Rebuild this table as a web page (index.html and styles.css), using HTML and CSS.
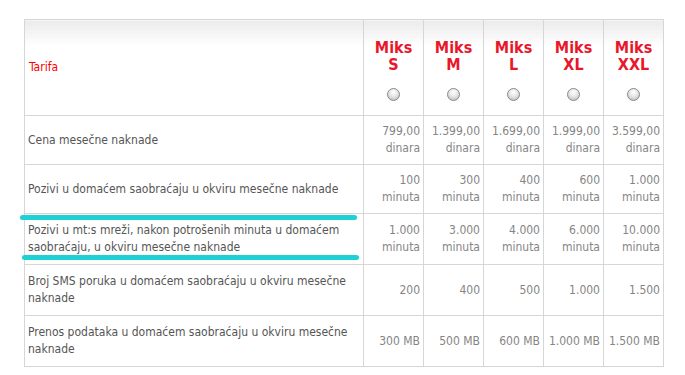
FILE: index.html
```html
<!DOCTYPE html>
<html lang="sr">
<head>
<meta charset="utf-8">
<title>Tarife</title>
<link rel="stylesheet" href="styles.css">
</head>
<body>
<div class="wrap">
  <table class="tariffs">
    <colgroup>
      <col class="c-label"><col class="c-plan"><col class="c-plan"><col class="c-plan"><col class="c-plan"><col class="c-plan">
    </colgroup>
    <thead>
      <tr class="head">
        <th class="label-head">Tarifa</th>
        <th class="plan"><div class="name">Miks<br>S</div><span class="radio"></span></th>
        <th class="plan"><div class="name">Miks<br>M</div><span class="radio"></span></th>
        <th class="plan"><div class="name">Miks<br>L</div><span class="radio"></span></th>
        <th class="plan"><div class="name">Miks<br>XL</div><span class="radio"></span></th>
        <th class="plan"><div class="name">Miks<br>XXL</div><span class="radio"></span></th>
      </tr>
    </thead>
    <tbody>
      <tr class="r49">
        <td class="label">Cena mesečne naknade</td>
        <td class="num">799,00<br>dinara</td>
        <td class="num">1.399,00<br>dinara</td>
        <td class="num">1.699,00<br>dinara</td>
        <td class="num">1.999,00<br>dinara</td>
        <td class="num">3.599,00<br>dinara</td>
      </tr>
      <tr class="r49">
        <td class="label">Pozivi u domaćem saobraćaju u okviru mesečne naknade</td>
        <td class="num">100<br>minuta</td>
        <td class="num">300<br>minuta</td>
        <td class="num">400<br>minuta</td>
        <td class="num">600<br>minuta</td>
        <td class="num">1.000<br>minuta</td>
      </tr>
      <tr class="r51">
        <td class="label">Pozivi u mt:s mreži, nakon potrošenih minuta u domaćem saobraćaju, u okviru mesečne naknade</td>
        <td class="num">1.000<br>minuta</td>
        <td class="num">3.000<br>minuta</td>
        <td class="num">4.000<br>minuta</td>
        <td class="num">6.000<br>minuta</td>
        <td class="num">10.000<br>minuta</td>
      </tr>
      <tr class="r51">
        <td class="label">Broj SMS poruka u domaćem saobraćaju u okviru mesečne naknade</td>
        <td class="num">200</td>
        <td class="num">400</td>
        <td class="num">500</td>
        <td class="num">1.000</td>
        <td class="num">1.500</td>
      </tr>
      <tr class="r51">
        <td class="label">Prenos podataka u domaćem saobraćaju u okviru mesečne naknade</td>
        <td class="num">300 MB</td>
        <td class="num">500 MB</td>
        <td class="num">600 MB</td>
        <td class="num">1.000 MB</td>
        <td class="num">1.500 MB</td>
      </tr>
    </tbody>
  </table>
  <span class="mark mark-top"></span>
  <span class="mark mark-bottom"></span>
</div>
</body>
</html>
```
FILE: styles.css
```css
html, body {
  margin: 0;
  padding: 0;
  background: #fff;
}
body {
  font-family: "DejaVu Sans Condensed", "DejaVu Sans", sans-serif;
  font-size: 12px;
}
.wrap {
  position: relative;
  padding: 19px 0 0 24px;
}
.tariffs {
  border-collapse: collapse;
  table-layout: fixed;
  width: 640px;
}
.c-label { width: 339px; }
.c-plan { width: 60px; }
.tariffs th,
.tariffs td {
  border: 1px solid #d6d6d6;
  vertical-align: middle;
  line-height: 17px;
}
.head th {
  height: 95px;
  padding: 0;
  background: linear-gradient(to bottom, #ebebeb 0, #fff 26px);
}
.label-head {
  text-align: left;
  padding-left: 4px !important;
  color: #ff0000;
  font-weight: normal;
  font-size: 12px;
}
.plan {
  text-align: center;
}
.name {
  color: #e8172a;
  font-weight: bold;
  font-size: 16px;
  line-height: 17px;
  padding-top: 4px;
}
.radio {
  display: block;
  width: 11px;
  height: 11px;
  margin: 15px auto 0;
  border: 1px solid #8a8a8a;
  border-radius: 50%;
  background: radial-gradient(circle at 50% 30%, #ffffff 0, #e6e6e6 45%, #b5b5b5 100%);
}
.r49 td { height: 48px; }
.r51 td { height: 50px; }
.label {
  padding: 0 3px;
  color: #555;
}
.num {
  padding: 0 3px 0 0;
  text-align: right;
  color: #858585;
}
.mark {
  position: absolute;
  height: 5px;
  border-radius: 3px;
  background: #1fd1d5;
}
.mark-top {
  left: 20px;
  top: 215px;
  width: 337px;
}
.mark-bottom {
  left: 22px;
  top: 255px;
  width: 337px;
}
```
